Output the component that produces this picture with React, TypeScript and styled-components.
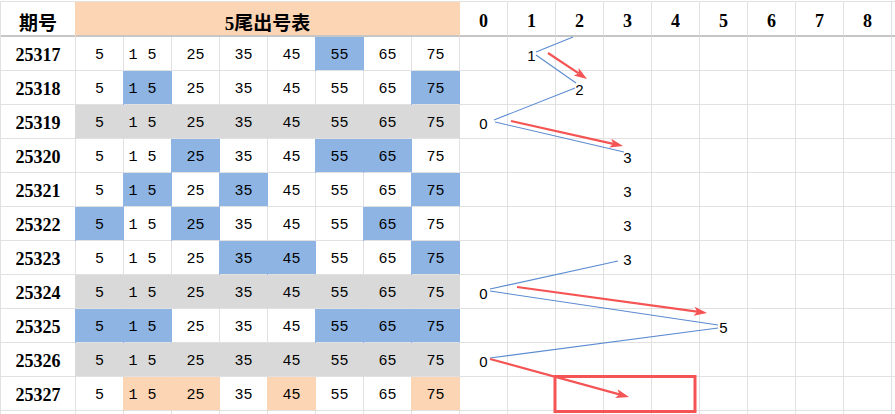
import React from 'react';
import styled, { createGlobalStyle, css } from 'styled-components';

const LINE = '#e1e1e1';
const RULE = '#c6c6c6';
const BLUE = '#8db4e2';
const GRAY = '#d9d9d9';
const PEACH = '#fcd5b4';
const RED = '#f45454';
const WIRE = '#5b8bd0';

const NUMS = [5, 15, 25, 35, 45, 55, 65, 75];
const DIGITS = [0, 1, 2, 3, 4, 5, 6, 7, 8];

interface Draw {
	issue: string;
	hits: number[];
	tone?: 'gray' | 'peach';
}

const DRAWS: Draw[] = [
	{ issue: '25317', hits: [55] },
	{ issue: '25318', hits: [15, 75] },
	{ issue: '25319', hits: [], tone: 'gray' },
	{ issue: '25320', hits: [25, 55, 65] },
	{ issue: '25321', hits: [15, 35, 75] },
	{ issue: '25322', hits: [5, 25, 65] },
	{ issue: '25323', hits: [35, 45, 75] },
	{ issue: '25324', hits: [], tone: 'gray' },
	{ issue: '25325', hits: [5, 15, 55, 65, 75] },
	{ issue: '25326', hits: [], tone: 'gray' },
	{ issue: '25327', hits: [15, 25, 45, 75], tone: 'peach' },
];

// trend wires and hand-drawn arrows, in page pixels
const WIRES = [
	[536, 52, 573, 37],
	[536, 55, 576, 83],
	[575, 88, 494, 120],
	[495, 122, 624, 152],
	[618, 261, 490, 289],
	[490, 291, 718, 325],
	[718, 328, 490, 358],
];

const ARROWS = [
	[548, 53, 587, 79],
	[511, 121, 623, 146],
	[517, 287, 707, 313],
	[490, 359, 629, 397],
];

const GlobalStyle = createGlobalStyle`
	html, body {
		margin: 0;
		padding: 0;
		background: #fff;
		overflow: hidden;
	}

	body {
		font-family: "Liberation Sans", "Noto Sans CJK SC", sans-serif;
	}
`;

const Sheet = styled.div`
	position: relative;
	width: 895px;
	height: 414px;
	padding-top: 1px;
	box-sizing: border-box;
	overflow: hidden;
	background: #fff;
`;

const Grid = styled.div`
	display: grid;
	grid-template-columns: 75px repeat(18, 48px);
	grid-template-rows: 35px repeat(12, 34px);
	width: max-content;
	border-top: 1px solid ${LINE};
	border-left: 1px solid ${LINE};
`;

const Cell = styled.div<{ $fill?: string; $span?: number }>`
	box-sizing: border-box;
	display: flex;
	align-items: center;
	justify-content: center;
	padding-top: 3px;
	border-right: 1px solid ${LINE};
	border-bottom: 1px solid ${LINE};
	background: ${({ $fill }) => $fill ?? '#fff'};
	color: #000;
	white-space: nowrap;
	${({ $span }) => $span && `grid-column: span ${$span};`}
	${({ $fill }) =>
		$fill &&
		css`
			border-right-color: ${$fill};
			box-shadow: -1px 0 0 ${$fill};
		`}
`;

const HeadCell = styled(Cell)`
	padding-top: 6px;
	border-bottom: 2px solid ${RULE};
	font-family: "Liberation Serif", "Noto Sans CJK SC", serif;
	font-weight: bold;
	font-size: 18px;
`;

const HeadTitle = styled(HeadCell)`
	font-size: 19px;
`;

const IssueCell = styled(Cell)`
	font-family: "Liberation Serif", serif;
	font-weight: bold;
	font-size: 18px;
`;

const NumCell = styled(Cell)<{ $wide?: boolean }>`
	font-family: "Liberation Mono", monospace;
	font-size: 15px;
	letter-spacing: ${({ $wide }) => ($wide ? '10px' : '0')};
`;

const TrendCell = styled(Cell)`
	font-family: "Liberation Sans", sans-serif;
	font-size: 15px;
`;

const Overlay = styled.svg`
	position: absolute;
	left: 0;
	top: 0;
	pointer-events: none;
`;

const Arrow = ({ points }: { points: number[] }) => {
	const [x1, y1, x2, y2] = points;
	const len = Math.hypot(x2 - x1, y2 - y1);
	const ux = (x2 - x1) / len;
	const uy = (y2 - y1) / len;
	const bx = x2 - ux * 13;
	const by = y2 - uy * 13;
	const nx = -uy * 4.5;
	const ny = ux * 4.5;
	const mx = bx + ux * 3;
	const my = by + uy * 3;
	return (
		<g>
			<line x1={x1} y1={y1} x2={mx} y2={my} stroke={RED} strokeWidth={2.2} />
			<polygon
				points={`${x2},${y2} ${bx + nx},${by + ny} ${mx},${my} ${bx - nx},${by - ny}`}
				fill={RED}
			/>
		</g>
	);
};

const fillFor = (draw: Draw, n: number) => {
	if (draw.tone === 'gray') return GRAY;
	if (!draw.hits.includes(n)) return undefined;
	return draw.tone === 'peach' ? PEACH : BLUE;
};

const trendOf = (draw: Draw) => {
	if (draw.tone === 'gray') return 0;
	if (draw.tone === 'peach') return null;
	return draw.hits.length;
};

const App = (): JSX.Element => {
	return (
		<Sheet>
			<GlobalStyle />
			<Grid>
				<HeadTitle>期号</HeadTitle>
				<HeadTitle $span={8} $fill={PEACH}>
					5尾出号表
				</HeadTitle>
				{DIGITS.map((d) => (
					<HeadCell key={`h${d}`}>{d}</HeadCell>
				))}
				<HeadCell />

				{DRAWS.map((draw) => {
					const trend = trendOf(draw);
					return (
						<React.Fragment key={draw.issue}>
							<IssueCell>{draw.issue}</IssueCell>
							{NUMS.map((n) => (
								<NumCell key={n} $fill={fillFor(draw, n)} $wide={n === 15}>
									{n}
								</NumCell>
							))}
							{DIGITS.map((d) => (
								<TrendCell key={`t${d}`}>{trend === d ? d : ''}</TrendCell>
							))}
							<Cell />
						</React.Fragment>
					);
				})}

				{Array.from({ length: 19 }, (_, i) => (
					<Cell key={`blank${i}`} />
				))}
			</Grid>

			<Overlay width={895} height={414} viewBox="0 0 895 414">
				{WIRES.map(([x1, y1, x2, y2], i) => (
					<line key={`w${i}`} x1={x1} y1={y1} x2={x2} y2={y2} stroke={WIRE} strokeWidth={1.1} />
				))}
				{ARROWS.map((a, i) => (
					<Arrow key={`a${i}`} points={a} />
				))}
				<rect x={555} y={376.5} width={140} height={35} fill="none" stroke={RED} strokeWidth={3} />
			</Overlay>
		</Sheet>
	);
};

export default App;
